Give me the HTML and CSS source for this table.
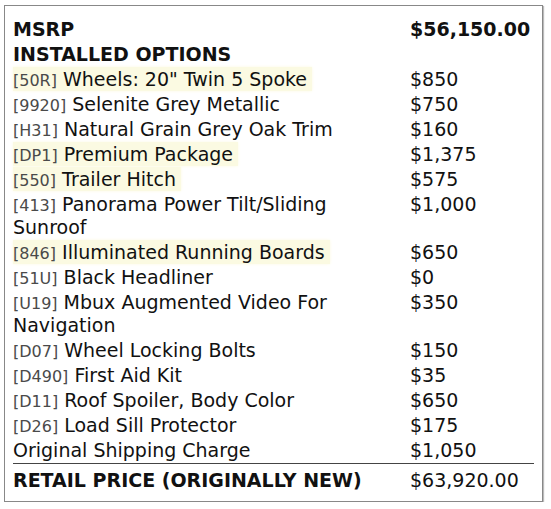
FILE: index.html
```html
<!DOCTYPE html>
<html>
<head>
<meta charset="utf-8">
<link rel="stylesheet" href="styles.css">
</head>
<body>
<div class="sticker">
  <table class="price-table">
    <tr class="head"><td class="desc">MSRP</td><td class="price">$56,150.00</td></tr>
    <tr class="head"><td class="desc">INSTALLED OPTIONS</td><td class="price"></td></tr>
    <tr><td class="desc"><span class="hl"><span class="code">[50R]</span> Wheels: 20" Twin 5 Spoke</span></td><td class="price">$850</td></tr>
    <tr><td class="desc"><span class="code">[9920]</span> Selenite Grey Metallic</td><td class="price">$750</td></tr>
    <tr><td class="desc"><span class="code">[H31]</span> Natural Grain Grey Oak Trim</td><td class="price">$160</td></tr>
    <tr><td class="desc"><span class="hl"><span class="code">[DP1]</span> Premium Package</span></td><td class="price">$1,375</td></tr>
    <tr><td class="desc"><span class="hl"><span class="code">[550]</span> Trailer Hitch</span></td><td class="price">$575</td></tr>
    <tr><td class="desc"><span class="code">[413]</span> Panorama Power Tilt/Sliding Sunroof</td><td class="price">$1,000</td></tr>
    <tr><td class="desc"><span class="hl"><span class="code">[846]</span> Illuminated Running Boards</span></td><td class="price">$650</td></tr>
    <tr><td class="desc"><span class="code">[51U]</span> Black Headliner</td><td class="price">$0</td></tr>
    <tr><td class="desc"><span class="code">[U19]</span> Mbux Augmented Video For Navigation</td><td class="price">$350</td></tr>
    <tr><td class="desc"><span class="code">[D07]</span> Wheel Locking Bolts</td><td class="price">$150</td></tr>
    <tr><td class="desc"><span class="code">[D490]</span> First Aid Kit</td><td class="price">$35</td></tr>
    <tr><td class="desc"><span class="code">[D11]</span> Roof Spoiler, Body Color</td><td class="price">$650</td></tr>
    <tr><td class="desc"><span class="code">[D26]</span> Load Sill Protector</td><td class="price">$175</td></tr>
    <tr class="last"><td class="desc">Original Shipping Charge</td><td class="price">$1,050</td></tr>
    <tr class="total"><td class="desc">RETAIL PRICE (ORIGINALLY NEW)</td><td class="price">$63,920.00</td></tr>
  </table>
</div>
</body>
</html>
```
FILE: styles.css
```css
html, body {
  margin: 0;
  padding: 0;
  background: #fff;
}
body {
  font-family: "DejaVu Sans", "Noto Sans", sans-serif;
  color: #111;
}
.sticker {
  margin: 5px 0 0 4px;
  width: 539px;
  height: 497px;
  border: 1px solid #888;
  box-shadow: 1px 1px 1px #bbb;
  padding: 11px 8px 0 8px;
  box-sizing: border-box;
}
.price-table {
  border-collapse: collapse;
  width: 521px;
  font-size: 19px;
  line-height: 23px;
}
.price-table td {
  padding: 1px 0;
  vertical-align: top;
}
.price-table td.desc {
  width: 383px;
  padding-right: 14px;
}
.price {
  white-space: nowrap;
}
.head td {
  font-weight: bold;
}
.code {
  font-size: 16px;
  line-height: 1;
  color: #4a4a4a;
}
.hl {
  background: #fbfae2;
  padding: 1px 5px 1px 0;
  box-shadow: 0 0 3px #fbfae2;
}
.last td {
  border-bottom: 1px solid #444;
}
.total td {
  padding-top: 5px;
}
.total .desc {
  font-weight: bold;
}
```
